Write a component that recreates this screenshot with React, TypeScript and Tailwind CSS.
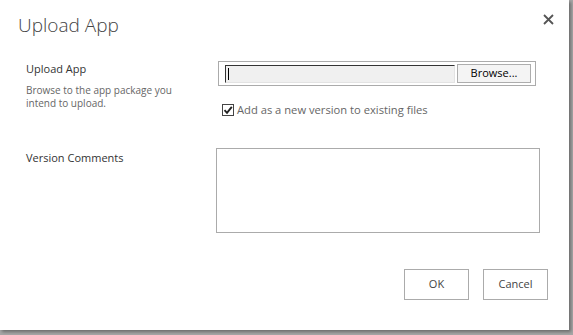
const font = { fontFamily: '"Open Sans", "Noto Sans", sans-serif' }

export default function App() {
  return (
    <div className="w-[573px] h-[335px] bg-[#a6a6a6] overflow-hidden" style={font}>
      <div className="w-[569px] h-[330px] bg-white shadow-[2px_2px_3px_rgba(0,0,0,0.35)] flex flex-col text-[#444]">
        {/* header */}
        <div className="flex items-start justify-between pl-[18px] pr-[15px] pt-[12px]">
          <h1 className="text-[19px] leading-[27px] font-light text-[#444]">Upload App</h1>
          <button className="mt-[2px]">
            <svg width="11" height="11" viewBox="0 0 11 11">
              <path d="M1 1 L10 10 M10 1 L1 10" stroke="#555" strokeWidth="1.8" />
            </svg>
          </button>
        </div>

        {/* upload row */}
        <div className="flex mt-[22px]">
          <div className="w-[218px] shrink-0 pl-[26px] pr-2">
            <div className="text-[11px] leading-[16px] text-[#333]">Upload App</div>
            <div className="mt-[7px] w-[160px] text-[10px] leading-[13px] text-[#666]">
              Browse to the app package you intend to upload.
            </div>
          </div>
          <div className="flex flex-col">
            <div className="w-[318px] h-[25px] border border-[#ababab] flex items-center pl-[6px] gap-[2px]">
              <div className="w-[230px] h-[18px] bg-[#f0f0f0] border-t border-l border-[#333] border-r border-b border-r-[#e3e3e3] border-b-[#e3e3e3] flex items-center pl-[2px]">
                <span className="w-px h-[12px] bg-black" />
              </div>
              <div className="w-[74px] h-[19px] border border-[#adadad] bg-[#f4f4f4] text-[11px] text-black flex items-center justify-center">
                Browse...
              </div>
            </div>
            <label className="flex items-center gap-[3px] mt-[16px] ml-[4px] text-[11.2px] leading-[16px] text-[#666]">
              <span className="w-[12px] h-[12px] border border-[#444] bg-white flex items-center justify-center">
                <svg width="10" height="10" viewBox="0 0 10 10">
                  <path d="M1.5 5.2 L4 7.8 L8.8 1.8" fill="none" stroke="#222" strokeWidth="1.9" />
                </svg>
              </span>
              Add as a new version to existing files
            </label>
          </div>
        </div>

        {/* comments row */}
        <div className="flex mt-[30px]">
          <div className="w-[216px] shrink-0 pl-[26px] pt-[2px] text-[11px] leading-[16px] text-[#333]">Version Comments</div>
          <div className="w-[324px] h-[85px] border border-[#ababab]" />
        </div>

        {/* footer */}
        <div className="flex justify-end gap-[14px] pr-[21px] mt-[36px]">
          <button className="w-[65px] h-[31px] border border-[#ababab] bg-white text-[11px] text-[#444]">OK</button>
          <button className="w-[65px] h-[31px] border border-[#ababab] bg-white text-[11px] text-[#444]">Cancel</button>
        </div>
      </div>
    </div>
  )
}
